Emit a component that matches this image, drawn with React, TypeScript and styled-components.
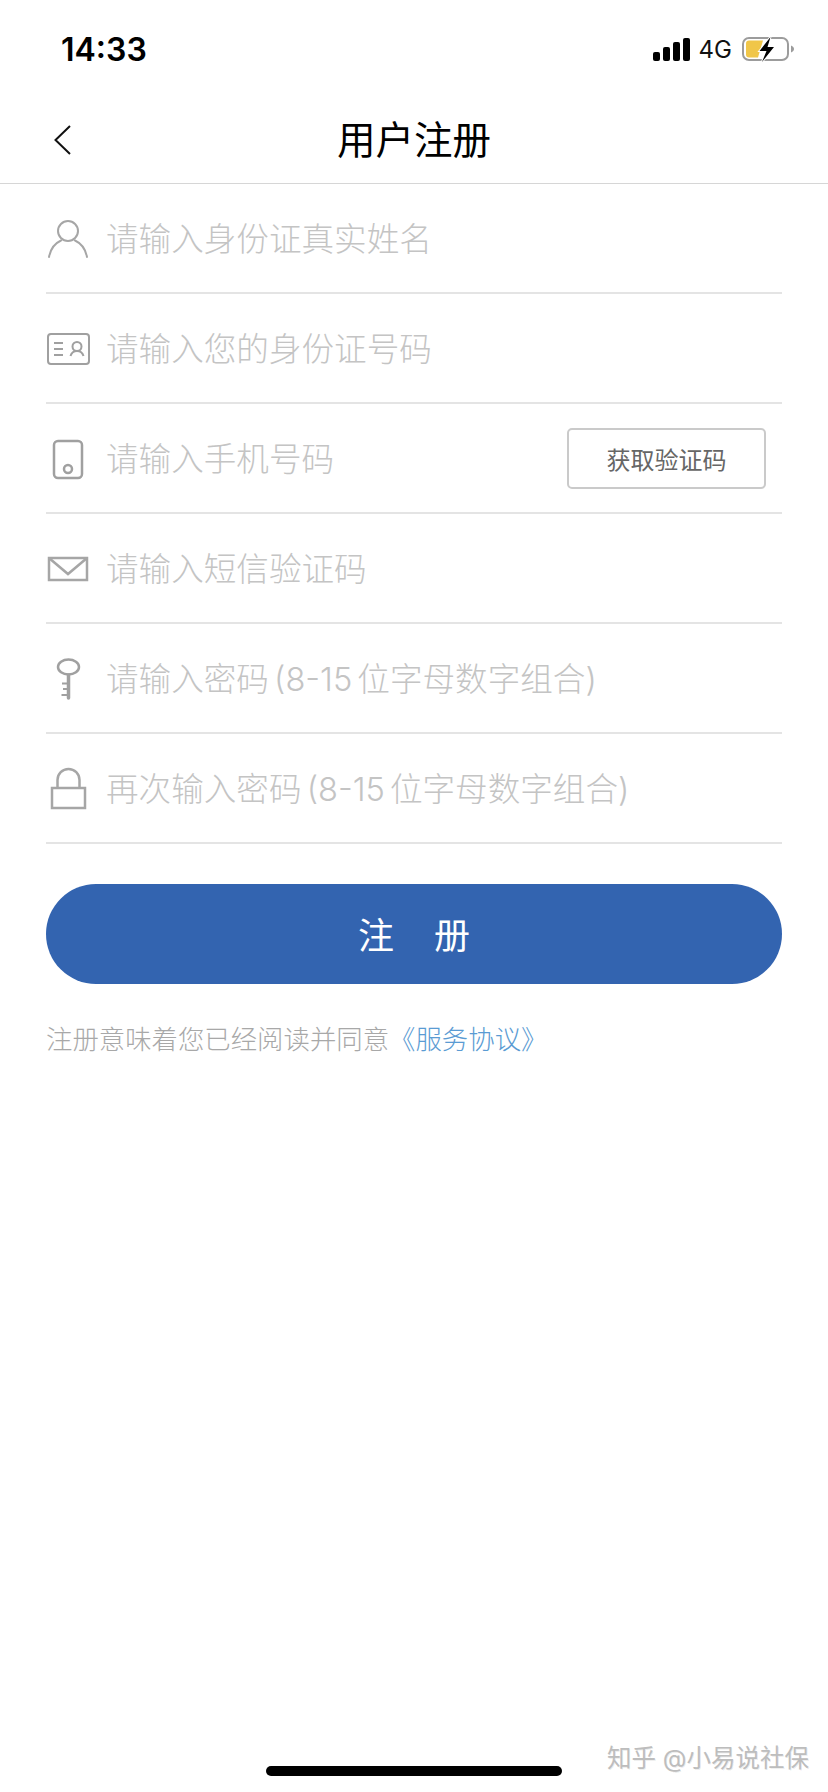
import React from "react";
import styled, { createGlobalStyle } from "styled-components";

const GlobalStyle = createGlobalStyle`
  html, body {
    margin: 0;
    padding: 0;
    background: #fff;
  }
  * {
    box-sizing: border-box;
  }
`;

const UserIcon = () => (
  <svg width="44" height="44" viewBox="0 0 44 44" fill="none" stroke="#a6a6a6" strokeWidth="2">
    <circle cx="22" cy="15" r="10" />
    <path d="M3 41C4.5 33 9.5 27 15 24.5M41 41C39.5 33 34.5 27 29 24.5" strokeLinecap="round" />
  </svg>
);

const CardIcon = () => (
  <svg width="44" height="44" viewBox="0 0 44 44" fill="none" stroke="#a0a0a0" strokeWidth="2">
    <rect x="2" y="8" width="41" height="30" rx="3" />
    <path d="M8 17H17M8 23H17M8 29H17" />
    <circle cx="31" cy="20.5" r="4.5" />
    <path d="M24.5 30C25.5 26.5 28 25 31 25S36.5 26.5 37.5 30" />
  </svg>
);

const PhoneIcon = () => (
  <svg width="44" height="44" viewBox="0 0 44 44" fill="none" stroke="#a0a0a0" strokeWidth="2.5">
    <rect x="8" y="5" width="28" height="37" rx="4" />
    <circle cx="22" cy="33" r="4" />
  </svg>
);

const MailIcon = () => (
  <svg width="44" height="44" viewBox="0 0 44 44" fill="none" stroke="#a6a6a6" strokeWidth="2.5">
    <rect x="3" y="12" width="38" height="22" />
    <path d="M3 12L22 28L41 12" />
  </svg>
);

const KeyIcon = () => (
  <svg width="44" height="44" viewBox="0 0 44 44" fill="none" stroke="#a0a0a0">
    <ellipse cx="22.5" cy="11" rx="10.5" ry="7.5" strokeWidth="2.5" />
    <path d="M22.5 19V42" strokeWidth="3.5" strokeLinecap="round" />
    <path d="M16 27.5H22M17 33H22M15.5 39H22" strokeWidth="2" />
  </svg>
);

const LockIcon = () => (
  <svg width="44" height="44" viewBox="0 0 44 44" fill="none" stroke="#a6a6a6" strokeWidth="2.5">
    <rect x="6" y="22" width="33" height="20" />
    <path d="M11.5 22V14a11 11 0 0 1 22 0V22" />
  </svg>
);

const BackIcon = () => (
  <svg width="17" height="30" viewBox="0 0 17 30" fill="none" stroke="#111" strokeWidth="2">
    <path d="M16 1L1.5 15L16 29" />
  </svg>
);

const SignalIcon = () => (
  <svg width="37" height="23" viewBox="0 0 37 23" fill="#000">
    <rect x="0" y="14" width="7" height="9" rx="2" />
    <rect x="10" y="9" width="7" height="14" rx="2" />
    <rect x="20" y="4" width="7" height="19" rx="2" />
    <rect x="30" y="0" width="7" height="23" rx="2" />
  </svg>
);

const BatteryIcon = () => (
  <svg width="52" height="25" viewBox="0 0 52 25" fill="none">
    <rect x="1" y="1" width="45" height="22" rx="6" stroke="#9c9c9c" strokeWidth="2" />
    <path d="M7 3.5H21L16 20.5H7A3 3 0 0 1 4 17.5V6.5A3 3 0 0 1 7 3.5Z" fill="#f0c649" />
    <path
      d="M28.5 0L17.5 14H24.5L20 25L32 10H25.5Z"
      fill="#000"
      stroke="#fff"
      strokeWidth="2"
      paintOrder="stroke"
    />
    <path d="M49 8.5C51 9.5 52 10.5 52 12S51 14.5 49 15.5Z" fill="#9c9c9c" />
  </svg>
);

const fields = [
  { icon: <UserIcon />, hint: "请输入身份证真实姓名" },
  { icon: <CardIcon />, hint: "请输入您的身份证号码" },
  { icon: <PhoneIcon />, hint: "请输入手机号码", action: "获取验证码" },
  { icon: <MailIcon />, hint: "请输入短信验证码" },
  { icon: <KeyIcon />, hint: "请输入密码 (8-15 位字母数字组合)" },
  { icon: <LockIcon />, hint: "再次输入密码 (8-15 位字母数字组合)" },
];

const App: React.FC = () => {
  return (
    <Page>
      <GlobalStyle />
      <StatusBar>
        <Clock>14:33</Clock>
        <StatusIcons>
          <SignalIcon />
          <Network>4G</Network>
          <BatteryIcon />
        </StatusIcons>
      </StatusBar>

      <NavBar>
        <BackButton>
          <BackIcon />
        </BackButton>
        <Title>用户注册</Title>
      </NavBar>

      <Form>
        {fields.map((field) => (
          <FieldRow key={field.hint}>
            <IconSlot>{field.icon}</IconSlot>
            <Hint>{field.hint}</Hint>
            {field.action && <CodeButton>{field.action}</CodeButton>}
          </FieldRow>
        ))}
        <SubmitButton>注 册</SubmitButton>
        <Terms>
          注册意味着您已经阅读并同意<TermsLink>《服务协议》</TermsLink>
        </Terms>
      </Form>

      <Watermark>知乎 @小易说社保</Watermark>
      <HomeIndicator />
    </Page>
  );
};

const fontStack = `"Inter", "Noto Sans CJK SC", sans-serif`;

const Page = styled.div`
  position: relative;
  width: 828px;
  height: 1792px;
  overflow: hidden;
  background: #fff;
  font-family: ${fontStack};
`;

const StatusBar = styled.div`
  display: flex;
  align-items: center;
  justify-content: space-between;
  height: 98px;
  padding: 1px 34px 0 61px;
`;

const Clock = styled.div`
  font-size: 32px;
  font-weight: 600;
  color: #000;
`;

const StatusIcons = styled.div`
  display: flex;
  align-items: center;
  gap: 9px;
`;

const Network = styled.span`
  font-size: 24px;
  color: #111;
  margin-right: 1px;
`;

const NavBar = styled.div`
  position: relative;
  display: flex;
  align-items: center;
  justify-content: center;
  height: 86px;
  padding-bottom: 8px;
  border-bottom: 1px solid #d6d6d6;
`;

const BackButton = styled.div`
  position: absolute;
  left: 54px;
  top: 27px;
  display: flex;
`;

const Title = styled.h1`
  margin: 0;
  font-size: 38.5px;
  font-weight: 400;
  color: #000;
`;

const Form = styled.div`
  padding: 0 46px;
`;

const FieldRow = styled.div`
  display: flex;
  align-items: center;
  gap: 16px;
  height: 110px;
  padding-right: 16px;
  border-bottom: 2px solid #e4e4e4;
`;

const IconSlot = styled.div`
  display: flex;
  flex: none;
  width: 44px;
`;

const Hint = styled.span`
  flex: 1;
  padding-bottom: 4px;
  font-size: 32.6px;
  font-weight: 300;
  word-spacing: -4px;
  color: #c4c4c4;
  white-space: nowrap;
`;

const CodeButton = styled.div`
  display: flex;
  align-items: center;
  justify-content: center;
  width: 199px;
  height: 61px;
  border: 2px solid #cacaca;
  border-radius: 5px;
  font-size: 24px;
  color: #666;
`;

const SubmitButton = styled.div`
  display: flex;
  align-items: center;
  justify-content: center;
  height: 100px;
  margin-top: 40px;
  padding-bottom: 2px;
  border-radius: 50px;
  background: #3364b0;
  color: #fff;
  font-size: 36px;
  word-spacing: 30px;
`;

const Terms = styled.div`
  margin-top: 37px;
  font-size: 26.4px;
  line-height: 36px;
  font-weight: 300;
  color: #a8a8a8;
`;

const TermsLink = styled.span`
  color: #5a9bd3;
`;

const Watermark = styled.div`
  position: absolute;
  right: 19px;
  bottom: 19px;
  font-size: 24.5px;
  line-height: 30px;
  color: #bdbdbd;
  text-shadow: 1px 1px 0 rgba(0, 0, 0, 0.08);
`;

const HomeIndicator = styled.div`
  position: absolute;
  left: 266px;
  bottom: 16px;
  width: 296px;
  height: 10px;
  border-radius: 5px;
  background: #000;
`;

export default App;
